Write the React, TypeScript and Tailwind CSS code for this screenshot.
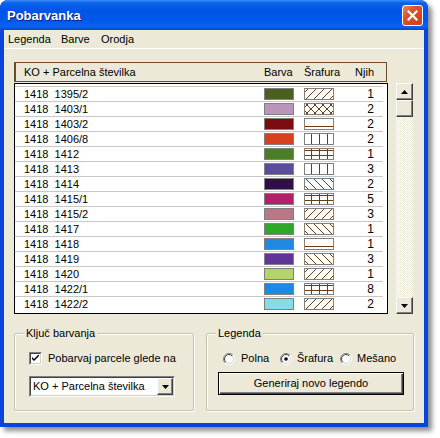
import React from "react";

type Pat = "fwd" | "back" | "cross" | "horiz" | "vert" | "grid";

const rows: [string, string, Pat, number][] = [
  ["1395/2", "#4b5f22", "fwd", 1],
  ["1403/1", "#b996b9", "cross", 2],
  ["1403/2", "#7a0b0e", "horiz", 2],
  ["1406/8", "#d9401f", "vert", 2],
  ["1412", "#4e7e23", "grid", 1],
  ["1413", "#5c4b9f", "vert", 3],
  ["1414", "#2f0f45", "back", 2],
  ["1415/1", "#b41f6b", "grid", 5],
  ["1415/2", "#b87886", "fwd", 3],
  ["1417", "#2fa82a", "back", 1],
  ["1418", "#1f8ae0", "horiz", 1],
  ["1419", "#5f3697", "back", 3],
  ["1420", "#b6d36b", "fwd", 1],
  ["1422/1", "#1e88e2", "grid", 8],
  ["1422/2", "#86dde7", "fwd", 2],
];

const BROWN = "#6b3d14";

function Hatch({ p, id }: { p: Pat; id: number }) {
  const lines: React.ReactNode[] = [];
  const starts = [-6, 2, 10, 18, 26];
  if (p === "fwd" || p === "cross") {
    starts.forEach((x, i) =>
      lines.push(<line key={"f" + i} x1={x} y1={11} x2={x + 10} y2={1} stroke={BROWN} strokeWidth={1} />)
    );
  }
  if (p === "back" || p === "cross") {
    starts.forEach((x, i) =>
      lines.push(<line key={"b" + i} x1={x} y1={1} x2={x + 10} y2={11} stroke={BROWN} strokeWidth={1} />)
    );
  }
  if (p === "horiz") {
    lines.push(<line key="h" x1={1} y1={8.5} x2={29} y2={8.5} stroke={BROWN} strokeWidth={1} shapeRendering="crispEdges" />);
  }
  if (p === "vert" || p === "grid") {
    [7.5, 15.5, 23.5].forEach((x, i) =>
      lines.push(<line key={"v" + i} x1={x} y1={1} x2={x} y2={11} stroke={BROWN} strokeWidth={1} shapeRendering="crispEdges" />)
    );
  }
  if (p === "grid") {
    [2.5, 7.5].forEach((y, i) =>
      lines.push(<line key={"g" + i} x1={1} y1={y} x2={29} y2={y} stroke={BROWN} strokeWidth={1} shapeRendering="crispEdges" />)
    );
  }
  return (
    <svg width={30} height={12} viewBox="0 0 30 12" className="block shrink-0">
      <defs>
        <clipPath id={"hc" + id}>
          <rect x={1} y={1} width={28} height={10} />
        </clipPath>
      </defs>
      <rect x={0.5} y={0.5} width={29} height={11} fill="#fff" stroke="#808080" shapeRendering="crispEdges" />
      <g clipPath={`url(#hc${id})`}>{lines}</g>
    </svg>
  );
}

function Arrow({ up }: { up?: boolean }) {
  return (
    <svg width={7} height={4} viewBox="0 0 7 4" className="block">
      {up ? <polygon points="3.5,0 7,4 0,4" fill="#000" /> : <polygon points="0,0 7,0 3.5,4" fill="#000" />}
    </svg>
  );
}

const raised =
  "border border-t-white border-l-white border-r-[#404040] border-b-[#404040] shadow-[inset_-1px_-1px_0_#808080] bg-[#ece9d8]";

function Radio({ on }: { on?: boolean }) {
  return (
    <svg width={12} height={12} viewBox="0 0 12 12" className="block shrink-0">
      <defs>
        <linearGradient id="ro" x1="0" y1="0" x2="1" y2="1">
          <stop offset="0.45" stopColor="#808080" />
          <stop offset="0.55" stopColor="#ffffff" />
        </linearGradient>
        <linearGradient id="ri" x1="0" y1="0" x2="1" y2="1">
          <stop offset="0.45" stopColor="#404040" />
          <stop offset="0.55" stopColor="#d4d0c8" />
        </linearGradient>
      </defs>
      <circle cx={6} cy={6} r={5.5} fill="#fff" stroke="url(#ro)" strokeWidth={1} />
      <circle cx={6} cy={6} r={4.5} fill="#fff" stroke="url(#ri)" strokeWidth={1} />
      {on && <circle cx={6} cy={6} r={1.8} fill="#000" />}
    </svg>
  );
}

export default function App() {
  return (
    <div className="w-[440px] h-[438px] bg-white font-[family-name:Liberation_Sans,Arial,sans-serif] text-[11px] text-black">
      <div className="w-[428px] h-[427px] flex flex-col rounded-t-[8px] bg-[#0a44d8] shadow-[4px_4px_5px_rgba(0,0,0,0.45)]">
        {/* Title bar */}
        <div className="h-[30px] shrink-0 flex items-center justify-between pl-[7px] pr-[5px] rounded-t-[8px] bg-[linear-gradient(180deg,#3d8ff9_0%,#0a62ec_10%,#0055e5_35%,#0058ea_70%,#0a64f0_88%,#0048cc_100%)]">
          <span className="pt-[2px] text-[13px] font-bold text-white leading-[16px] [text-shadow:1px_1px_0_#0a1c80]">
            Pobarvanka
          </span>
          <div className="w-[21px] h-[21px] rounded-[3px] border border-white bg-[linear-gradient(135deg,#f08a6a_0%,#e0502c_35%,#c8401c_100%)] flex items-center justify-center">
            <svg width={11} height={11} viewBox="0 0 11 11" className="block">
              <path d="M1.5 1.5 L9.5 9.5 M9.5 1.5 L1.5 9.5" stroke="#fff" strokeWidth={2.2} strokeLinecap="square" />
            </svg>
          </div>
        </div>
        {/* Body */}
        <div className="flex-1 mx-[4px] mb-[4px] bg-[#ece9d8] flex flex-col">
          {/* Menu */}
          <div className="h-[18px] shrink-0 flex items-center pl-[4px] leading-[13px]">
            <span className="w-[53px]">Legenda</span>
            <span className="w-[40px]">Barve</span>
            <span>Orodja</span>
          </div>
          <div className="h-[1px] bg-white shrink-0" />
          {/* Content */}
          <div className="pt-[13px] pl-[10px] flex flex-col">
            {/* Header */}
            <div className="w-[373px] h-[20px] border border-[#6f4a28] border-l-2 flex items-center leading-[13px]">
              <span className="w-[248px] pl-[8px]">KO + Parcelna številka</span>
              <span className="w-[40px]">Barva</span>
              <span className="w-[40px]">Šrafura</span>
              <span className="w-[30px] text-right">Njih</span>
            </div>
            <div className="mt-[1px] flex">
              {/* List */}
              <div className="w-[374px] h-[231px] border border-black bg-white pt-[2px] overflow-hidden">
                {rows.map(([num, color, pat, n], i) => (
                  <div key={i} className="h-[15px] mr-[4px] border-t border-[#c8c8c8] flex items-center leading-[13px]">
                    <span className="w-[249px] pl-[9px] whitespace-pre">{"1418  " + num}</span>
                    <div className="w-[30px] h-[12px] border border-[#808080] shrink-0" style={{ backgroundColor: color }} />
                    <div className="ml-[10px]">
                      <Hatch p={pat} id={i} />
                    </div>
                    <span className="w-[40px] text-right text-[12px]">{n}</span>
                  </div>
                ))}
              </div>
              {/* Scrollbar */}
              <div className="ml-[8px] w-[17px] h-[231px] flex flex-col">
                <div className={"h-[17px] w-[17px] flex items-center justify-center " + raised}>
                  <Arrow up />
                </div>
                <div className={"h-[17px] w-[17px] " + raised} />
                <div className="flex-1 bg-[repeating-conic-gradient(#ece9d8_0%_25%,#ffffff_0%_50%)] bg-[length:2px_2px]" />
                <div className={"h-[17px] w-[17px] flex items-center justify-center " + raised}>
                  <Arrow />
                </div>
              </div>
            </div>
            {/* Group boxes */}
            <div className="mt-[19px] flex gap-[12px]">
              <div className="w-[180px] h-[78px] border border-[#c5c2b2] rounded-[2px] shadow-[inset_1px_1px_0_#fff,1px_1px_0_#fff] flex flex-col">
                <span className="block w-fit -mt-[7px] ml-[9px] px-[2px] bg-[#ece9d8] leading-[13px]">Ključ barvanja</span>
                <div className="mt-[12px] pl-[14px] flex items-center h-[13px]">
                  <div className="w-[13px] h-[13px] border border-t-[#808080] border-l-[#808080] border-r-white border-b-white shrink-0">
                    <div className="w-full h-full border border-t-[#404040] border-l-[#404040] border-r-[#d4d0c8] border-b-[#d4d0c8] bg-white flex items-center justify-center">
                      <svg width={7} height={7} viewBox="0 0 7 7" className="block">
                        <path d="M0 2 L0 4 L2 6 L7 1 L7 -1 L2 4 Z" fill="#000" />
                      </svg>
                    </div>
                  </div>
                  <span className="ml-[6px] leading-[13px]">Pobarvaj parcele glede na</span>
                </div>
                <div className="mt-[11px] ml-[14px] w-[146px] h-[21px] border border-t-[#808080] border-l-[#808080] border-r-white border-b-white">
                  <div className="w-full h-full border border-t-[#404040] border-l-[#404040] border-r-[#d4d0c8] border-b-[#d4d0c8] bg-white flex items-center">
                    <span className="flex-1 pl-[2px] leading-[13px]">KO + Parcelna številka</span>
                    <div className={"w-[16px] h-[17px] flex items-center justify-center " + raised}>
                      <Arrow />
                    </div>
                  </div>
                </div>
              </div>
              <div className="w-[208px] h-[78px] border border-[#c5c2b2] rounded-[2px] shadow-[inset_1px_1px_0_#fff,1px_1px_0_#fff] flex flex-col">
                <span className="block w-fit -mt-[7px] ml-[9px] px-[2px] bg-[#ece9d8] leading-[13px]">Legenda</span>
                <div className="mt-[12px] pl-[16px] flex items-center h-[13px] leading-[13px]">
                  <div className="w-[57px] flex items-center">
                    <Radio />
                    <span className="ml-[6px]">Polna</span>
                  </div>
                  <div className="w-[60px] flex items-center">
                    <Radio on />
                    <span className="ml-[5px]">Šrafura</span>
                  </div>
                  <div className="flex items-center">
                    <Radio />
                    <span className="ml-[5px]">Mešano</span>
                  </div>
                </div>
                <div className="mt-[7px] ml-[11px] w-[186px] h-[23px] border border-black bg-[#ece9d8] shadow-[inset_1px_1px_0_#fff,inset_-1px_-1px_0_#404040,inset_-2px_-2px_0_#808080] flex items-center justify-center leading-[13px]">
                  Generiraj novo legendo
                </div>
              </div>
            </div>
          </div>
        </div>
      </div>
    </div>
  );
}
